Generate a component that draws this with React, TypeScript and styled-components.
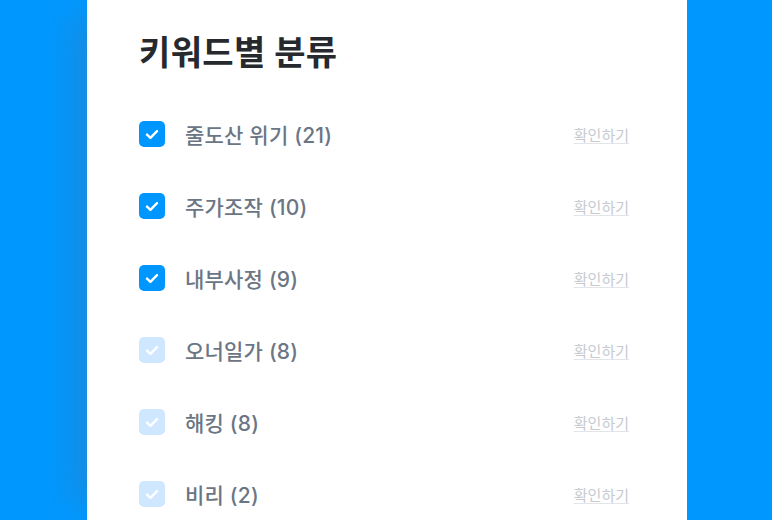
import React from 'react'
import styled, { createGlobalStyle } from 'styled-components'

const GlobalStyle = createGlobalStyle`
  html, body {
    margin: 0;
    padding: 0;
    background: #0098ff;
  }
  body {
    font-family: Inter, "Noto Sans CJK KR", sans-serif;
  }
`

const Page = styled.div`
  width: 772px;
  height: 520px;
  overflow: hidden;
  background: #0098ff;
  display: flex;
  justify-content: flex-start;
  padding-left: 87px;
  box-sizing: border-box;
`

const Panel = styled.section`
  width: 600px;
  height: 100%;
  background: #ffffff;
  padding: 27px 58px 0 52px;
  box-sizing: border-box;
  box-shadow: -30px 0 34px -16px rgba(60, 120, 170, 0.4);
`

const Title = styled.h2`
  margin: 0 0 42px;
  font-size: 34px;
  font-weight: 700;
  line-height: 52px;
  letter-spacing: 0.4px;
  color: #26292d;
`

const List = styled.ul`
  margin: 0;
  padding: 0;
  list-style: none;
  display: flex;
  flex-direction: column;
  gap: 46px;
`

const Row = styled.li`
  display: flex;
  align-items: center;
  height: 26px;
`

const Box = styled.span<{ $on: boolean }>`
  width: 26px;
  height: 26px;
  border-radius: 5px;
  flex: none;
  display: flex;
  align-items: center;
  justify-content: center;
  background: ${({ $on }) => ($on ? '#0096ff' : '#cfe8ff')};
  margin-right: 20px;
`

const Label = styled.span`
  flex: 1;
  font-size: 21px;
  font-weight: 500;
  color: #6b7684;
  letter-spacing: 0.2px;
`

const Check = styled.a`
  font-size: 15px;
  color: #c6cace;
  text-decoration: underline;
  text-decoration-color: #e2e5e8;
  text-underline-offset: 2px;
  cursor: pointer;
`

const items = [
  { name: '줄도산 위기', count: 21, on: true },
  { name: '주가조작', count: 10, on: true },
  { name: '내부사정', count: 9, on: true },
  { name: '오너일가', count: 8, on: false },
  { name: '해킹', count: 8, on: false },
  { name: '비리', count: 2, on: false },
]

const CheckIcon = () => (
  <svg width="14" height="11" viewBox="0 0 14 11" fill="none">
    <path d="M2 5.6 L5.4 8.8 L12 2.2" stroke="#fff" strokeWidth="2.4" strokeLinecap="round" strokeLinejoin="round" />
  </svg>
)

const App = () => {
  return (
    <>
      <GlobalStyle />
      <Page>
        <Panel>
          <Title>키워드별 분류</Title>
          <List>
            {items.map((item) => (
              <Row key={item.name}>
                <Box $on={item.on}>
                  <CheckIcon />
                </Box>
                <Label>{`${item.name} (${item.count})`}</Label>
                <Check>확인하기</Check>
              </Row>
            ))}
          </List>
        </Panel>
      </Page>
    </>
  )
}

export default App
